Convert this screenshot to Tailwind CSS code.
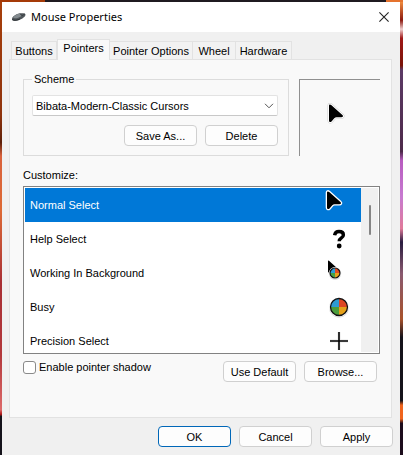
<!DOCTYPE html>
<html lang="en">
<head>
<meta charset="utf-8">
<meta name="viewport" content="width=device-width, initial-scale=1">
<title>Mouse Properties</title>
<script src="https://cdn.jsdelivr.net/npm/@tailwindcss/browser@4"></script>
</head>
<body class="flex min-h-screen flex-col overflow-hidden bg-[#1d1a20] font-['Liberation_Sans',Arial,sans-serif] text-[11px] leading-4 text-black">
<div class="h-[2px] shrink-0 bg-[linear-gradient(90deg,#a53a08_0_45px,#1f1a20_45px_386px,#e5732e_386px)]"></div>
<div class="flex flex-1">
  <div class="w-[2px] shrink-0 bg-[linear-gradient(180deg,#a8400c_0%,#8e330c_25%,#5c1f08_31%,#d9623c_34%,#dd6a35_46%,#a83035_62%,#b3393c_78%,#dc6a6a_90%,#b01818_91%,#15131b_91.5%)]"></div>
  <main class="flex min-w-0 flex-1 flex-col bg-[#f0f0f0]">
    <header class="flex h-[30px] items-center bg-white pl-[9px] pr-2">
      <svg class="h-4 w-4 shrink-0" viewBox="0 0 16 16" aria-hidden="true">
        <path d="M1 10C1 7.5 4.5 5.2 8.5 4.4c3-.6 5.8-.2 6 1.2.3 2.2-3.7 4.800-7.500 5.900C4 12.300 1 12.200 1 10z" fill="#51575b"/>
        <path d="M2 8.500C3.500 6.500 6 5.200 8.700 4.600l1.800 2.300c-2.200 1.500-4.500 2.300-7 2.400z" fill="#858c90"/>
        <path d="M9 4.500l2 2.300 3-2" fill="none" stroke="#363c40" stroke-width=".8"/>
        <path d="M1.200 10.500c2 1.300 5 .8 8-.7" fill="none" stroke="#2e3336" stroke-width="1"/>
      </svg>
      <h1 class="ml-1 flex-1 font-['Noto_Sans','Open_Sans',sans-serif] text-[11px]">Mouse Properties</h1>
      <button type="button" aria-label="Close" class="flex h-4 w-4 items-center justify-center">
        <svg class="h-[10px] w-[10px]" viewBox="0 0 10 10" fill="none" stroke="#222" stroke-width="1.100"><path d="M.4.4l9.200 9.200M9.600.4L.4 9.600"/></svg>
      </button>
    </header>

    <nav role="tablist" aria-label="Mouse settings" class="flex items-end px-[9px] pt-[7px]">
      <button role="tab" type="button" class="h-[18px] w-[46px] border border-b-0 border-[#e2e2e2] bg-[#f2f2f2]">Buttons</button>
      <button role="tab" type="button" aria-selected="true" class="relative -mb-px h-[21px] w-[53px] border border-b-0 border-[#e2e2e2] bg-[#f9f9f9] pb-1">Pointers</button>
      <button role="tab" type="button" class="h-[18px] w-[82px] whitespace-nowrap border border-x-0 border-b-0 border-[#e2e2e2] bg-[#f2f2f2]">Pointer Options</button>
      <button role="tab" type="button" class="h-[18px] w-[44px] border border-b-0 border-[#e2e2e2] bg-[#f2f2f2]">Wheel</button>
      <button role="tab" type="button" class="h-[18px] w-[56px] border border-b-0 border-l-0 border-[#e2e2e2] bg-[#f2f2f2]">Hardware</button>
    </nav>

    <section role="tabpanel" aria-label="Pointers" class="ml-[7px] mr-2 flex flex-col border border-[#e2e2e2] bg-[#f9f9f9] pb-[35px] pl-[13px] pr-[11px] pt-[11px]">
      <div class="flex gap-[10px]">
        <fieldset class="min-w-0 flex-1 border border-[#dcdcdc] pb-[9px] pl-2 pr-[10px]">
          <legend class="px-[2px]">Scheme</legend>
          <div class="relative mt-2">
            <select aria-label="Scheme" class="block h-[21px] w-full appearance-none rounded-[2px] border border-[#e3e3e3] border-b-[#c8c8c8] bg-white pl-[3px] pr-6">
              <option>Bibata-Modern-Classic Cursors</option>
            </select>
            <svg class="pointer-events-none absolute right-1 top-2 h-[6px] w-[10px]" viewBox="0 0 10 6" fill="none" stroke="#555" stroke-width="1"><path d="M1 .8l4 4 4-4"/></svg>
          </div>
          <div class="mt-[9px] flex justify-end gap-2">
            <button type="button" class="h-[21px] w-[73px] rounded border border-[#d0d0d0] bg-[#fdfdfd]">Save As...</button>
            <button type="button" class="h-[21px] w-[73px] rounded border border-[#d0d0d0] bg-[#fdfdfd]">Delete</button>
          </div>
        </fieldset>
        <div class="mt-2 flex w-[81px] items-center justify-center border-l border-t border-[#909090]">
          <svg class="-mt-2 mr-2 h-[24px] w-[20px]" viewBox="0 0 20 24" role="img" aria-label="Pointer preview">
            <path d="M3 3.500v15c0 1.600 1.500 2 2.500 1l2.800-3.300c.6-.6 1.400-.9 2.200-.9h4.800c1.700 0 2.300-1.300 1.100-2.300L5.200 3C4 2 3 2.300 3 3.500z" stroke="#cfcfcf" stroke-width="3"/>
            <path d="M3 3.500v15c0 1.600 1.500 2 2.500 1l2.800-3.300c.6-.6 1.400-.9 2.200-.9h4.800c1.700 0 2.300-1.300 1.100-2.300L5.200 3C4 2 3 2.300 3 3.500z" stroke="#fff" stroke-width="2"/>
            <path d="M3 3.500v15c0 1.600 1.500 2 2.500 1l2.800-3.300c.6-.6 1.400-.9 2.200-.9h4.800c1.700 0 2.300-1.300 1.100-2.300L5.200 3C4 2 3 2.300 3 3.500z"/>
          </svg>
        </div>
      </div>

      <h2 id="customize" class="mt-[11px]">Customize:</h2>
      <div class="mt-[3px] flex h-[168px] border border-[#828282] bg-white p-px">
        <ul role="listbox" aria-labelledby="customize" class="min-w-0 flex-1 overflow-hidden">
          <li role="option" aria-selected="true" class="flex h-[34px] items-center justify-between bg-[#0078d7] pl-[5px] pr-[11px] text-white">Normal Select
            <svg class="-mt-2 mr-[6px] h-[24px] w-[20px]" viewBox="0 0 20 24" aria-hidden="true">
              <path d="M3 3.500v15c0 1.600 1.500 2 2.500 1l2.800-3.300c.6-.6 1.400-.9 2.200-.9h4.800c1.700 0 2.300-1.300 1.100-2.300L5.200 3C4 2 3 2.300 3 3.500z" fill="#000" stroke="#fff" stroke-width="2.600"/>
              <path d="M3 3.500v15c0 1.600 1.500 2 2.500 1l2.800-3.300c.6-.6 1.400-.9 2.200-.9h4.800c1.700 0 2.300-1.300 1.100-2.300L5.200 3C4 2 3 2.300 3 3.500z" fill="#000"/>
            </svg>
          </li>
          <li role="option" class="flex h-[34px] items-center justify-between pl-[5px] pr-[11px]">Help Select
            <svg class="h-[22px] w-[22px]" viewBox="0 0 22 22" aria-hidden="true">
              <path d="M6.600 7.300C7 4.600 8.700 3.500 11 3.500c2.700 0 4.400 1.300 4.400 3.400 0 3.200-4.200 2.700-4.200 6.300" fill="none" stroke="#000" stroke-width="3.400"/>
              <circle cx="11.200" cy="18" r="2.400"/>
            </svg>
          </li>
          <li role="option" class="flex h-[34px] items-center justify-between pl-[5px] pr-[11px]">Working In Background
            <svg class="h-[26px] w-[22px]" viewBox="0 0 22 26" aria-hidden="true">
              <path d="M0 1.200v10.500c0 .8.600 1 1.200.5L9.500 8.500 1 .8C.500.300 0 .6 0 1.200z"/>
              <circle cx="7" cy="13.800" r="6.200" fill="#ddd"/>
              <circle cx="7" cy="13" r="6" fill="#fff"/>
              <path d="M7 13V8a5 5 0 0 0-5 5z" fill="#2c9bd6"/>
              <path d="M7 13V8a5 5 0 0 1 5 5z" fill="#e04a22"/>
              <path d="M7 13v5a5 5 0 0 1-5-5z" fill="#47a044"/>
              <path d="M7 13v5a5 5 0 0 0 5-5z" fill="#e8a01c"/>
              <circle cx="7" cy="13" r="5" fill="none" stroke="#111" stroke-width="1.200"/>
            </svg>
          </li>
          <li role="option" class="flex h-[34px] items-center justify-between pl-[5px] pr-[11px]">Busy
            <svg class="h-[22px] w-[22px]" viewBox="0 0 22 22" aria-hidden="true">
              <circle cx="11" cy="11.800" r="10" fill="#ddd"/>
              <circle cx="11" cy="11" r="9.800" fill="#fff"/>
              <path d="M11 11V2.500A8.500 8.500 0 0 0 2.500 11z" fill="#2e9bd3"/>
              <path d="M11 11V2.500A8.500 8.500 0 0 1 19.500 11z" fill="#dd4622"/>
              <path d="M11 11v8.500A8.500 8.500 0 0 1 2.500 11z" fill="#4b9d3c"/>
              <path d="M11 11v8.500A8.500 8.500 0 0 0 19.500 11z" fill="#e5a019"/>
              <circle cx="11" cy="11" r="8.500" fill="none" stroke="#111" stroke-width="1.300"/>
            </svg>
          </li>
          <li role="option" class="flex h-[34px] items-center justify-between pl-[5px] pr-[11px]">Precision Select
            <svg class="h-[22px] w-[22px]" viewBox="0 0 22 22" aria-hidden="true">
              <path d="M11 2v18M2 11h18" stroke="#e6e6e6" stroke-width="3"/>
              <path d="M11 2v18M2 11h18" stroke="#000" stroke-width="1.600"/>
            </svg>
          </li>
        </ul>
        <div class="flex w-[17px] shrink-0 justify-center bg-[#f0f0f0] pt-[17px]">
          <div class="h-[30px] w-[2px] rounded-full bg-[#858585]"></div>
        </div>
      </div>

      <div class="mt-[7px] flex items-start">
        <label class="flex flex-1 items-center gap-[3px] whitespace-nowrap leading-[13px]">
          <input type="checkbox" class="h-[13px] w-[13px] appearance-none rounded-[3px] border border-[#8a8a8a] bg-white">
          Enable pointer shadow
        </label>
        <div class="flex gap-2 pr-[3px]">
          <button type="button" class="h-[21px] w-[73px] rounded border border-[#d0d0d0] bg-[#fdfdfd]">Use Default</button>
          <button type="button" class="h-[21px] w-[73px] rounded border border-[#d0d0d0] bg-[#fdfdfd]">Browse...</button>
        </div>
      </div>
    </section>

    <footer class="flex justify-end gap-2 px-[7px] py-2">
      <button type="button" class="h-[21px] w-[73px] rounded border border-[#0067b8] bg-[#fdfdfd]">OK</button>
      <button type="button" class="h-[21px] w-[73px] rounded border border-[#d0d0d0] bg-[#fdfdfd]">Cancel</button>
      <button type="button" class="h-[21px] w-[73px] rounded border border-[#d0d0d0] bg-[#fdfdfd]">Apply</button>
    </footer>
  </main>
  <div class="w-[3px] shrink-0 bg-[linear-gradient(180deg,#ef8a3c_0%,#8c1a10_4%,#f0d0d0_6%,#a01818_8%,#7a1408_14%,#5c3a66_15%,#4d2a4a_33%,#b85cc0_35%,#c77ad0_43%,#e07a9a_50%,#2a1c40_53%,#8a5a70_60%,#a8522c_70%,#15131b_74%,#15131b_88%,#f0641c_89%,#f0641c_92%,#1c0c1c_93%)]"></div>
</div>
</body>
</html>
